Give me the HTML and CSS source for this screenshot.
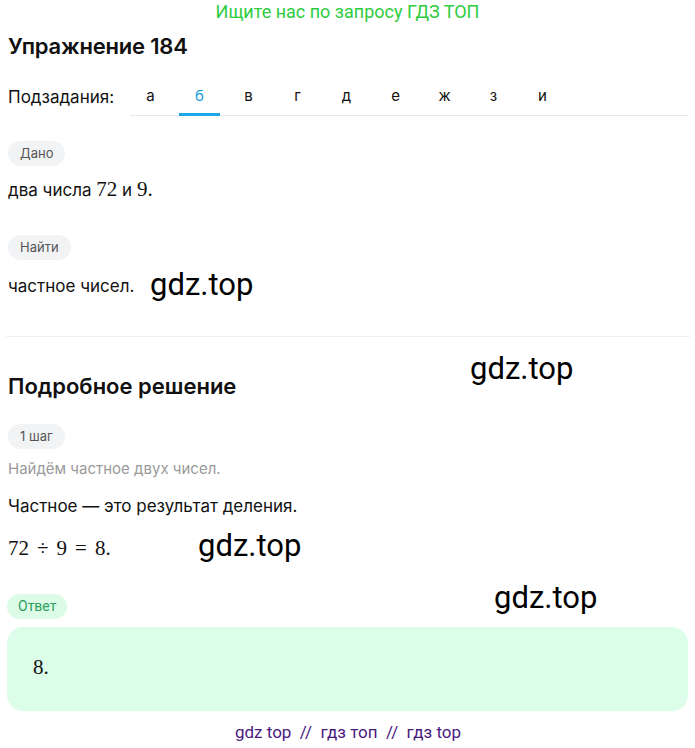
FILE: index.html
```html
<!DOCTYPE html>
<html lang="ru">
	<head>
		<meta charset="UTF-8" />
		<meta name="viewport" content="width=device-width, initial-scale=1.0" />
		<title>Упражнение 184</title>
		<link rel="stylesheet" href="styles.css">
	</head>
	<body>
		<div class="promo">Ищите нас по запросу ГДЗ ТОП</div>

		<div class="page">
			<h1 class="title">Упражнение 184</h1>

			<div class="subtasks">
				<span class="subtasks-label">Подзадания:</span>
				<ul class="tabs">
					<li>а</li>
					<li class="active">б</li>
					<li>в</li>
					<li>г</li>
					<li>д</li>
					<li>е</li>
					<li>ж</li>
					<li>з</li>
					<li>и</li>
				</ul>
			</div>

			<div class="block first">
				<span class="badge">Дано</span>
				<p class="text">два числа <span class="math">72</span> и <span class="math">9.</span></p>
			</div>

			<div class="block find">
				<span class="badge">Найти</span>
				<p class="text">частное чисел.</p>
			</div>

			<hr class="divider" />

			<h2 class="subtitle">Подробное решение</h2>

			<div class="block step">
				<span class="badge">1 шаг</span>
				<p class="hint">Найдём частное двух чисел.</p>
				<p class="text">Частное — это результат деления.</p>
				<p class="formula math">72<span class="op">÷</span>9<span class="op">=</span>8.</p>
			</div>

			<div class="block answer-block">
				<span class="badge badge-green">Ответ</span>
				<div class="answer"><span class="math">8.</span></div>
			</div>

			<div class="footer">gdz top &nbsp;//&nbsp; гдз топ &nbsp;//&nbsp; гдз top</div>
		</div>

		<span class="mark mark-1">gdz.top</span>
		<span class="mark mark-2">gdz.top</span>
		<span class="mark mark-3">gdz.top</span>
		<span class="mark mark-4">gdz.top</span>
	</body>
</html>
```

FILE: styles.css
```css
* {
	box-sizing: border-box;
	margin: 0;
	padding: 0;
}

body {
	position: relative;
	background: #fff;
	color: #111;
	font-family: Inter, "Noto Sans", Arial, sans-serif;
}

.promo {
	font-family: Roboto, Arial, sans-serif;
	font-size: 18px;
	line-height: 22px;
	color: #2ecc40;
	text-align: center;
	padding-top: 1px;
}

.page {
	padding: 0 7px 0 8px;
}

.title {
	font-size: 22px;
	font-weight: 600;
	line-height: 26px;
	margin-top: 10px;
	letter-spacing: -0.2px;
}

.subtasks {
	display: flex;
	align-items: stretch;
	margin-top: 20px;
}

.subtasks-label {
	width: 122px;
	font-size: 17px;
	line-height: 36px;
}

.tabs {
	flex: 1;
	display: flex;
	gap: 8px;
	list-style: none;
	border-bottom: 1px solid #e8e8e8;
}

.tabs li {
	width: 41px;
	text-align: center;
	font-size: 15px;
	line-height: 34px;
	border-bottom: 3px solid transparent;
	margin-bottom: -1px;
}

.tabs li.active {
	color: #1a9ee0;
	border-bottom-color: #1ea7e8;
}

.block {
	margin-top: 33px;
}

.block.first {
	margin-top: 25px;
}

.badge {
	display: inline-block;
	height: 25px;
	line-height: 25px;
	padding: 0 12px;
	border-radius: 13px;
	background: #f2f3f5;
	color: #555;
	font-size: 13px;
	vertical-align: top;
}

.badge-green {
	background: #dcfce8;
	color: #2d9f5c;
	font-family: Roboto, Arial, sans-serif;
	font-size: 14px;
	padding: 0 11px;
}

.text {
	font-size: 17px;
	line-height: 24px;
	margin-top: 12px;
}

.block.find .text {
	margin-top: 14px;
}

.math {
	font-family: "Liberation Serif", "DejaVu Serif", serif;
	font-size: 21px;
	line-height: 1;
}

.op {
	margin: 0 8px;
}

.hint {
	font-size: 15px;
	line-height: 20px;
	color: #9a9a9a;
	margin-top: 10px;
}

.block .hint + .text {
	margin-top: 15px;
}

.formula {
	margin-top: 17px;
	line-height: 26px;
}

.divider {
	border: none;
	border-top: 1px solid #efefef;
	margin: 38px -2px 0 -2px;
}

.subtitle {
	font-size: 22px;
	font-weight: 600;
	line-height: 26px;
	margin-top: 36px;
}

.block.step {
	margin-top: 25px;
}

.answer-block {
	margin-top: 33px;
}

.answer-block .badge {
	margin-left: -1px;
}

.answer {
	margin: 8px 0 0 -1px;
	height: 84px;
	border-radius: 16px;
	background: #dcfde8;
	padding: 28px 26px;
	line-height: 26px;
}

.footer {
	font-family: Roboto, Arial, sans-serif;
	font-size: 17px;
	line-height: 22px;
	color: #4b1a80;
	text-align: center;
	margin-top: 10px;
}

.mark {
	position: absolute;
	font-family: Roboto, Arial, sans-serif;
	font-size: 31px;
	line-height: 34px;
	color: #000;
}

.mark-1 {
	left: 150px;
	top: 268px;
}

.mark-2 {
	left: 470px;
	top: 352px;
}

.mark-3 {
	left: 198px;
	top: 529px;
}

.mark-4 {
	left: 494px;
	top: 581px;
}
```
